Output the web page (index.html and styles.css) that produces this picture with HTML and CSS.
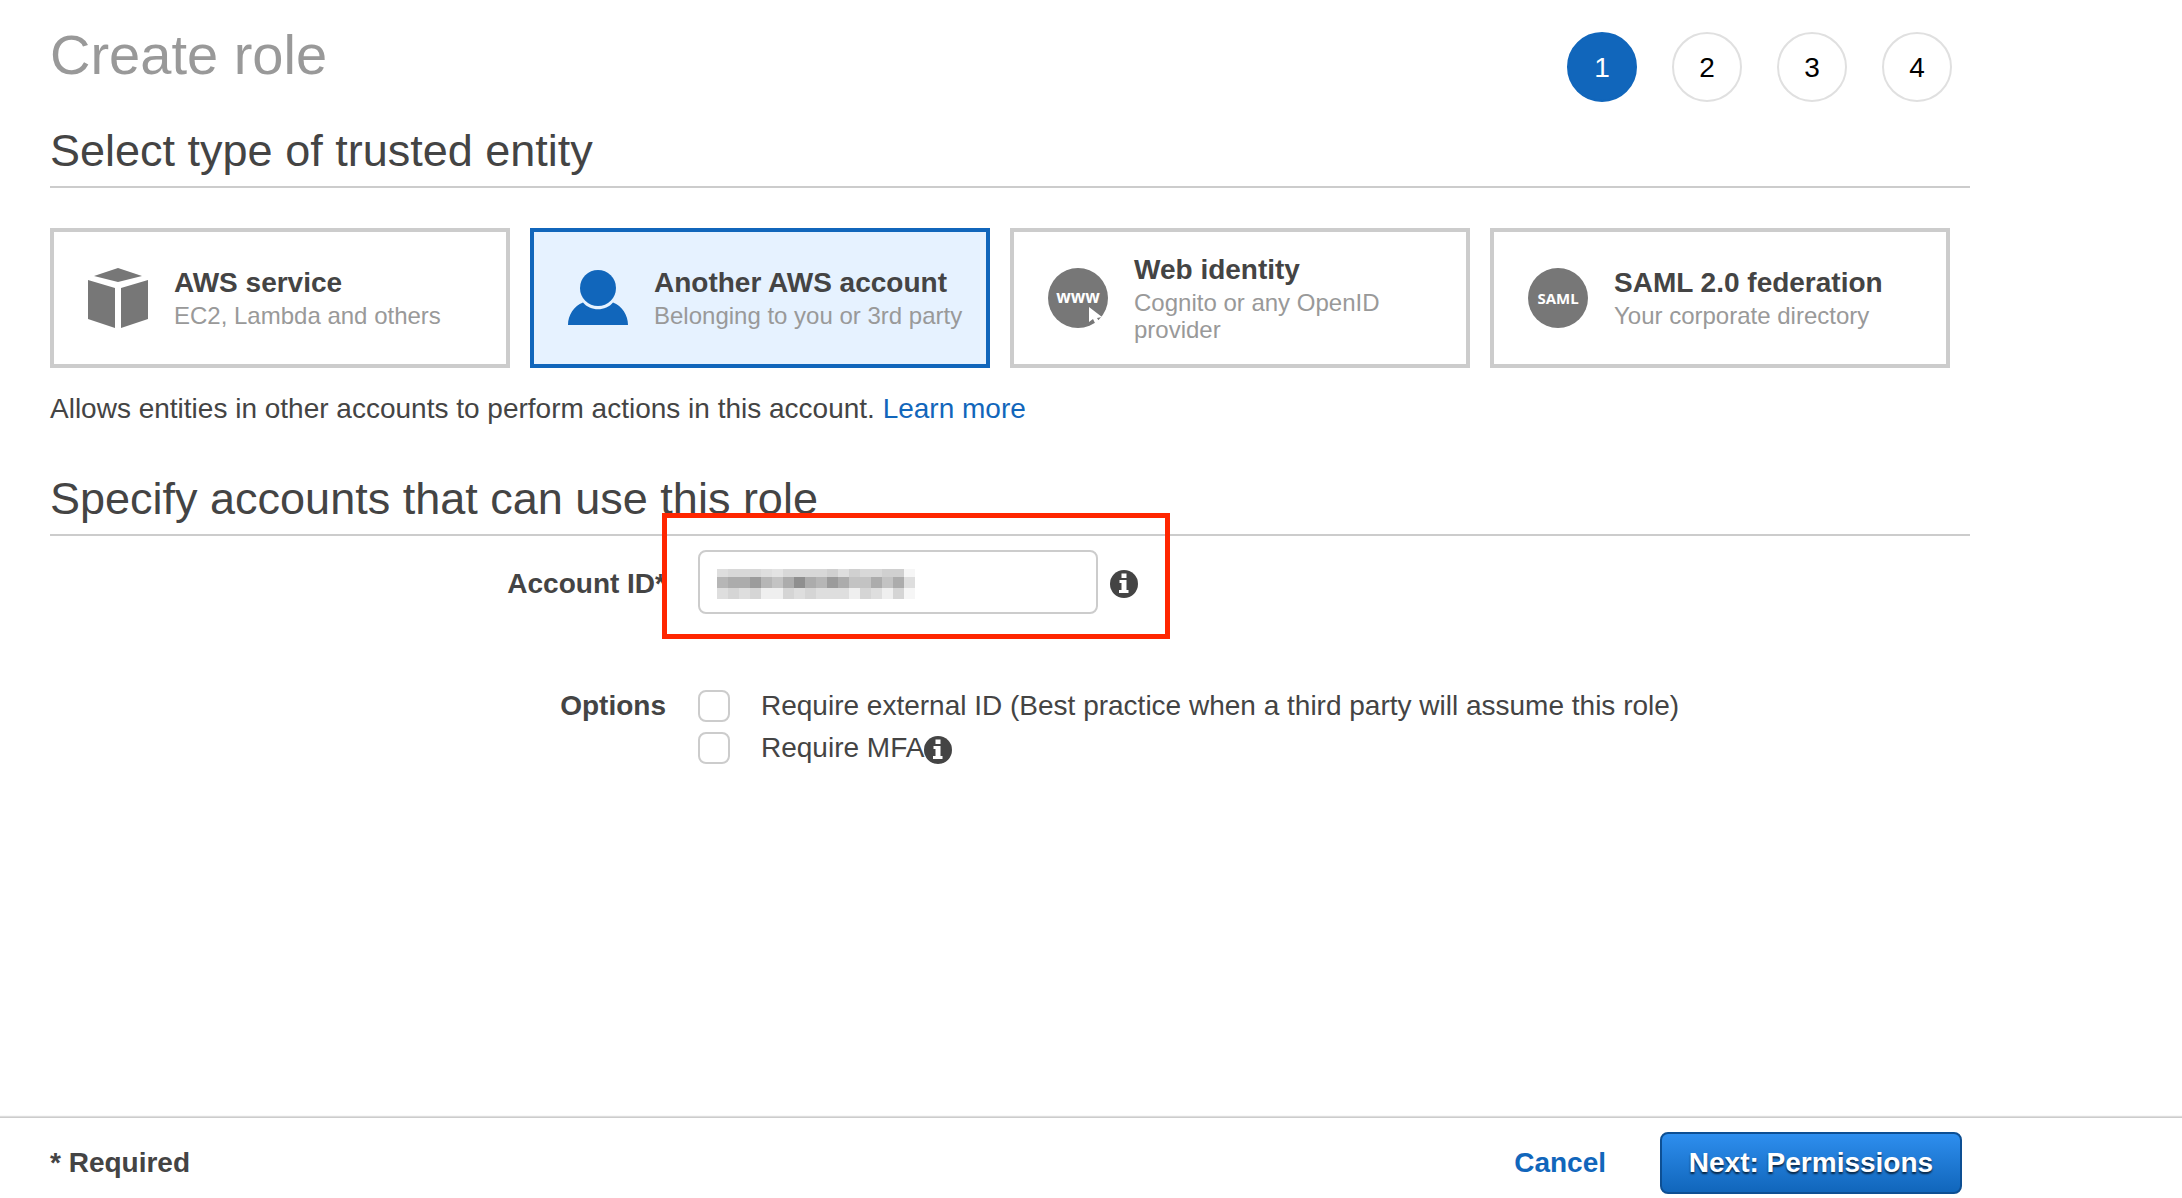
FILE: index.html
```html
<!DOCTYPE html>
<html lang="en">
<head>
<meta charset="utf-8">
<title>Create role</title>
<meta name="viewport" content="width=device-width, initial-scale=1">
<link rel="stylesheet" href="styles.css">
</head>
<body>
<svg width="0" height="0" class="defs" aria-hidden="true">
  <symbol id="info" viewBox="0 0 28 28">
    <circle cx="14" cy="14" r="14" fill="#444"/>
    <path d="M11.5 3.500h5v4.500h-5zM9.500 10h7v10h2v3h-9.500v-3h2.500v-7h-2z" fill="#fff"/>
  </symbol>
</svg>
<main class="page">
  <header class="top">
    <h1 class="title">Create role</h1>
    <ol class="steps">
      <li class="step step-active" aria-current="step">1</li>
      <li class="step">2</li>
      <li class="step">3</li>
      <li class="step">4</li>
    </ol>
  </header>

  <h2 class="section-title">Select type of trusted entity</h2>
  <div class="cards">
    <button type="button" class="card">
      <svg class="card-icon" viewBox="0 0 60 60" fill="#777" aria-hidden="true"><path d="M6 8 30 0 54 8 30 14zM0 12 27 20V60L0 51zM60 12 33 20V60L60 51z"/></svg>
      <span class="card-text"><span class="card-name">AWS service</span><span class="card-note">EC2, Lambda and others</span></span>
    </button>
    <button type="button" class="card card-selected" aria-pressed="true">
      <svg class="card-icon" viewBox="0 0 60 60" fill="#1166bb" aria-hidden="true"><circle cx="30" cy="20" r="18"/><path d="M0 57C0 47 6 38 15 34.500 22 43.500 38 43.500 45 34.500 54 38 60 47 60 57z"/></svg>
      <span class="card-text"><span class="card-name">Another AWS account</span><span class="card-note">Belonging to you or 3rd party</span></span>
    </button>
    <button type="button" class="card">
      <svg class="card-icon" viewBox="0 0 60 60" aria-hidden="true"><circle cx="30" cy="30" r="30" fill="#777"/><text x="30" y="35" class="badge badge-www">www</text><path d="M41 39v15l4-3 3 6 4-2-3-5 5-1z" fill="#fff"/></svg>
      <span class="card-text"><span class="card-name">Web identity</span><span class="card-note">Cognito or any OpenID provider</span></span>
    </button>
    <button type="button" class="card">
      <svg class="card-icon" viewBox="0 0 60 60" aria-hidden="true"><circle cx="30" cy="30" r="30" fill="#777"/><text x="30" y="36" class="badge">SAML</text></svg>
      <span class="card-text"><span class="card-name">SAML 2.0 federation</span><span class="card-note">Your corporate directory</span></span>
    </button>
  </div>
  <p class="hint">Allows entities in other accounts to perform actions in this account. <a href="#" class="link">Learn more</a></p>

  <h2 class="section-title">Specify accounts that can use this role</h2>
  <div class="form">
    <label class="form-label" for="account">Account ID*</label>
    <div class="account">
      <input id="account" class="account-input" type="text">
      <svg class="masked" viewBox="0 0 198 30" shape-rendering="crispEdges" aria-hidden="true">
        <g fill="#dedede"><path d="M0 0h11v8H0zM44 0h11v8H44zM121 0h11v8h-11z"/></g>
        <path fill="#e3e3e3" d="M55 0h11v8H55z"/>
        <path fill="#d8d8d8" d="M11 0h33v8H11zM66 0h44v8H66zM143 0h22v8h-22z"/>
        <path fill="#d0d0d0" d="M110 0h11v8h-11zM132 0h11v8h-11zM165 0h22v8h-22z"/>
        <path fill="#f6f6f6" d="M187 0h11v8h-11zM187 19h11v11h-11z"/>
        <path fill="#b6b6b6" d="M0 8h11v11H0zM44 8h11v11H44zM99 8h11v11H99z"/>
        <path fill="#acacac" d="M11 8h22v11H11zM66 8h11v11H66zM88 8h11v11H88zM121 8h11v11h-11zM154 8h11v11h-11zM176 8h11v11h-11z"/>
        <path fill="#9b9b9b" d="M33 8h11v11H33zM110 8h11v11h-11z"/>
        <path fill="#8f8f8f" d="M77 8h11v11H77z"/>
        <path fill="#c3c3c3" d="M55 8h11v11H55zM132 8h22v11h-22zM165 8h11v11h-11z"/>
        <path fill="#dedede" d="M187 8h11v11h-11zM0 19h11v11H0zM22 19h11v11H22zM77 19h11v11H77zM99 19h33v11H99zM154 19h11v11h-11z"/>
        <path fill="#d5d5d5" d="M11 19h11v11H11zM33 19h11v11H33zM66 19h11v11H66zM88 19h11v11H88zM143 19h11v11h-11zM176 19h11v11h-11z"/>
        <path fill="#efefef" d="M44 19h22v11H44zM132 19h11v11h-11zM165 19h11v11h-11z"/>
      </svg>
      <svg class="info" role="img" aria-label="Info"><use href="#info"/></svg>
      <div class="highlight"></div>
    </div>
    <div class="form-label" id="options">Options</div>
    <div class="options" role="group" aria-labelledby="options">
      <div class="option"><input type="checkbox" class="check" id="ext"><label for="ext">Require external ID (Best practice when a third party will assume this role)</label></div>
      <div class="option"><input type="checkbox" class="check" id="mfa"><label for="mfa">Require MFA</label><svg class="info" role="img" aria-label="Info"><use href="#info"/></svg></div>
    </div>
  </div>
</main>
<footer class="footer">
  <div class="footer-inner">
    <span class="required">* Required</span>
    <a href="#" class="link cancel">Cancel</a>
    <button type="button" class="next">Next: Permissions</button>
  </div>
</footer>
</body>
</html>
```
FILE: styles.css
```css
* { box-sizing: border-box; }
body {
  margin: 0;
  min-height: 100vh;
  display: flex;
  flex-direction: column;
  background: #fff;
  color: #444;
  font: 28px/32px "Liberation Sans", Arial, sans-serif;
}
.defs { position: absolute; }
.page { width: 100%; max-width: 1970px; padding: 22px 0 40px 50px; }
.top { display: flex; justify-content: space-between; align-items: flex-start; padding-right: 18px; }
.title { margin: 0; font-size: 56px; line-height: 66px; font-weight: 400; color: #999; }
.steps { display: flex; gap: 35px; margin: 10px 0 0; padding: 0; list-style: none; }
.step {
  width: 70px; height: 70px;
  border: 2px solid #e0e0e0; border-radius: 50%;
  color: #000; text-align: center; line-height: 68px;
}
.step-active { background: #1166bb; border-color: #1166bb; color: #fff; }
.section-title {
  margin: 0; height: 64px;
  border-bottom: 2px solid #ccc;
  font-size: 45px; line-height: 54px; font-weight: 400;
}
.top + .section-title { margin-top: 22px; }
.cards { display: grid; grid-template-columns: repeat(4, 1fr); gap: 20px; padding: 40px 20px 0 0; }
.card {
  display: flex; align-items: center; gap: 26px;
  height: 140px; padding: 0 10px 0 34px;
  border: 4px solid #ccc; background: #fff;
  color: #444; font: inherit; text-align: left;
}
.card-selected { border-color: #1166bb; background: #e6f2ff; }
.card-icon { width: 60px; height: 60px; flex: none; }
.card-name { display: block; padding-bottom: 3px; font-weight: 700; line-height: 32px; }
.card-note { display: block; font-size: 24px; line-height: 27px; color: #999; }
.badge { font: 700 15px "Open Sans", sans-serif; text-anchor: middle; fill: #fff; }
.badge-www { font-size: 17px; }
.hint { margin: 25px 0 47px; }
.link { color: #1166bb; text-decoration: none; }
.form { display: grid; grid-template-columns: 616px 1fr; column-gap: 32px; row-gap: 76px; padding-top: 14px; }
.form-label { text-align: right; font-weight: 700; }
.account { position: relative; display: flex; align-items: center; gap: 12px; }
.form-label[for="account"] { padding-top: 18px; }
.account-input { width: 400px; height: 64px; padding: 0 16px; border: 2px solid #ccc; border-radius: 8px; font: inherit; color: #444; }
.masked { position: absolute; left: 19px; top: 19px; width: 198px; height: 30px; }
.info { width: 28px; height: 28px; margin-top: 4px; flex: none; }
.highlight { position: absolute; left: -36px; top: -37px; width: 508px; height: 126px; border: 5px solid #ff2600; pointer-events: none; }
.options { display: flex; flex-direction: column; gap: 10px; }
.option { display: flex; align-items: center; height: 32px; }
.check { appearance: none; width: 32px; height: 32px; margin: 0 31px 0 0; border: 2px solid #ccc; border-radius: 8px; background: #fff; }
.footer { margin-top: auto; border-top: 1px solid #ccc; box-shadow: 0 -1px 1px #ddd; }
.footer-inner { display: flex; align-items: center; max-width: 1962px; height: 80px; padding: 10px 0 0 50px; font-weight: 700; }
.cancel { margin: 0 54px 0 auto; }
.next {
  width: 302px; height: 62px;
  border: 2px solid #0d4f93; border-radius: 8px;
  background: linear-gradient(#2e8eee, #1166bb);
  color: #fff; font: inherit; text-shadow: 0 2px 2px rgba(0, 0, 0, .7);
}
```
